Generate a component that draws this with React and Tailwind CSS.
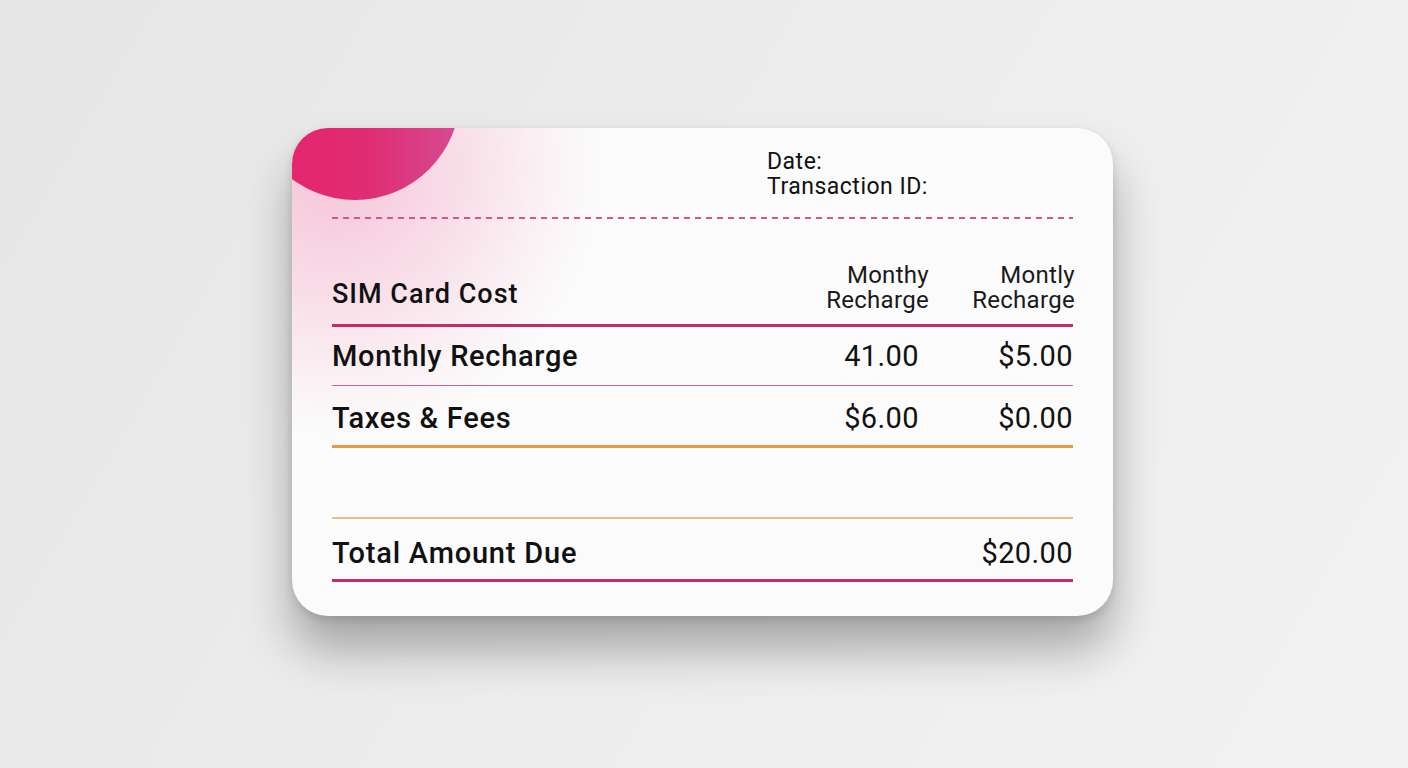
const rows = [
  { label: "Monthly Recharge", a: "41.00", b: "$5.00" },
  { label: "Taxes & Fees", a: "$6.00", b: "$0.00" },
];

export default function App() {
  return (
    <div className="min-h-[768px] w-full bg-[linear-gradient(120deg,#e6e6e6_0%,#ededed_50%,#f2f2f2_100%)] pt-[128px] font-['Roboto','Liberation_Sans',sans-serif] text-[#111]">
      <div className="relative ml-[292px] h-[488px] w-[821px] overflow-hidden rounded-[36px] bg-[#fbfbfb] shadow-[0_34px_48px_rgba(0,0,0,0.3),0_4px_10px_rgba(0,0,0,0.12)]">
        {/* soft pink glow + blob */}
        <div className="absolute -left-[230px] -top-[230px] h-[540px] w-[540px] rounded-full bg-[radial-gradient(closest-side,rgba(236,80,140,0.32),rgba(236,80,140,0.16)_50%,rgba(236,80,140,0.05)_80%,rgba(236,80,140,0)_100%)]" />
        <div className="absolute -left-[42px] -top-[138px] h-[210px] w-[210px] rounded-full bg-[linear-gradient(90deg,#e6236a_0%,#e02c72_55%,#d64a92_100%)]" />

        <div className="relative flex flex-col px-[40px]">
          {/* date block */}
          <div className="ml-[435px] pt-[21px] text-[23px] leading-[25px] tracking-[0.5px]">
            Date:
            <br />
            Transaction ID:
          </div>

          <div className="mt-[18px] h-[2px] bg-[repeating-linear-gradient(90deg,#d0588e_0px,#d0588e_6px,transparent_6px,transparent_11px)]" />

          {/* header */}
          <div className="mt-[44px] grid grid-cols-[1fr_150px_154px] items-end">
            <div className="pb-[3px] text-[27px] font-medium leading-[31px] tracking-[1px]">SIM Card Cost</div>
            <div className="-mr-[10px] text-right text-[24px] leading-[25px] tracking-[0.3px] text-[#1a1a1a]">
              Monthy
              <br />
              Recharge
            </div>
            <div className="-mr-[2px] text-right text-[24px] leading-[25px] tracking-[0.3px] text-[#1a1a1a]">
              Montly
              <br />
              Recharge
            </div>
          </div>
          <div className="mt-[11px] h-[3px] bg-[#c42b6a]" />

          {/* rows */}
          <div className="grid h-[58px] grid-cols-[1fr_150px_154px] items-center text-[29px] leading-[32px]">
            <div className="font-medium tracking-[0.7px]">{rows[0].label}</div>
            <div className="text-right tracking-[0.4px]">{rows[0].a}</div>
            <div className="text-right tracking-[0.4px]">{rows[0].b}</div>
          </div>
          <div className="h-px bg-[#c865a0]" />
          <div className="grid h-[59px] grid-cols-[1fr_150px_154px] pt-[16px] text-[29px] leading-[32px]">
            <div className="font-medium tracking-[0.7px]">{rows[1].label}</div>
            <div className="text-right tracking-[0.4px]">{rows[1].a}</div>
            <div className="text-right tracking-[0.4px]">{rows[1].b}</div>
          </div>
          <div className="h-[3px] bg-[#e99a3f]" />

          <div className="mt-[69px] h-[1.5px] bg-[#eabd8a]" />

          {/* total */}
          <div className="grid h-[60px] grid-cols-[1fr_154px] pt-[18px] text-[29px] leading-[32px]">
            <div className="font-medium tracking-[0.8px]">Total Amount Due</div>
            <div className="text-right tracking-[0.4px]">$20.00</div>
          </div>
          <div className="h-[3px] bg-[#c42b6a]" />
        </div>
      </div>
    </div>
  );
}
